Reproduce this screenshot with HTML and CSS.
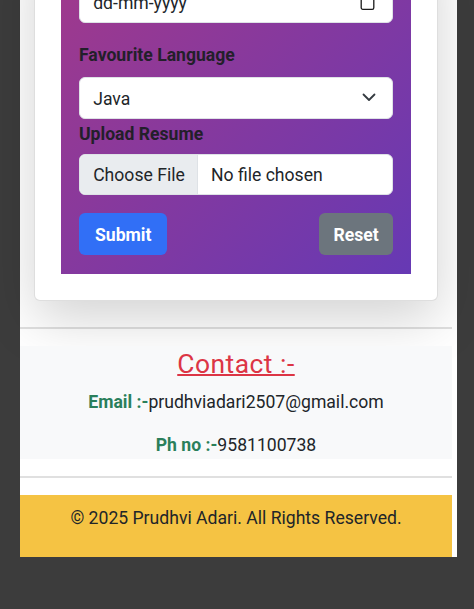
FILE: index.html
```html
<!DOCTYPE html>
<html lang="en">
<head>
<meta charset="utf-8">
<title>Registration</title>
<link rel="stylesheet" href="styles.css">
</head>
<body>
<div class="page">
  <main class="container">
    <div class="card">
      <form class="reg-form">
        <div class="field date-field">
          <span class="field-text">dd-mm-yyyy</span>
          <svg class="cal-icon" width="15" height="18" viewBox="0 0 15 18" aria-hidden="true">
            <rect x="1.2" y="1.7" width="12.6" height="14.6" rx="1.6" fill="none" stroke="#1a1a1a" stroke-width="1.3"/>
            <line x1="1.2" y1="5.5" x2="13.8" y2="5.5" stroke="#1a1a1a" stroke-width="1.2"/>
          </svg>
        </div>
        <label class="form-label lang-label">Favourite Language</label>
        <div class="field select-field">
          <span class="field-text">Java</span>
          <svg class="chevron" width="14" height="9" viewBox="0 0 14 9" aria-hidden="true">
            <path d="M1.5 1.5l5.5 5.5 5.5-5.5" fill="none" stroke="#343a40" stroke-width="1.8" stroke-linecap="round" stroke-linejoin="round"/>
          </svg>
        </div>
        <label class="form-label upload-label">Upload Resume</label>
        <div class="file-field">
          <span class="file-btn">Choose File</span>
          <span class="file-name">No file chosen</span>
        </div>
        <div class="actions">
          <button type="button" class="btn btn-submit">Submit</button>
          <button type="button" class="btn btn-reset">Reset</button>
        </div>
      </form>
    </div>
  </main>
  <hr class="divider">
  <section class="contact">
    <h4 class="contact-title">Contact :-</h4>
    <p class="contact-line first"><b class="tag">Email :-</b>prudhviadari2507@gmail.com</p>
    <p class="contact-line"><b class="tag">Ph no :-</b>9581100738</p>
  </section>
  <hr class="divider">
  <footer class="site-footer">© 2025 Prudhvi Adari. All Rights Reserved.</footer>
</div>
</body>
</html>
```
FILE: styles.css
```css
html, body {
  margin: 0;
  padding: 0;
}
body {
  background: #3c3c3c;
  font-family: Roboto, "Noto Sans", sans-serif;
  font-size: 17.6px;
  line-height: 26.4px;
  color: #212529;
  min-height: 609px;
}
.page {
  width: 432px;
  padding-right: 5px;
  margin-left: 20px;
  margin-top: -64.1px;
  background: #ffffff;
}
.container {
  padding: 0 14px 8px;
}
.card {
  background: #fff;
  border: 1px solid rgba(0, 0, 0, 0.13);
  border-radius: 6px;
  padding: 26.4px;
  box-shadow: 0 17.6px 52.8px rgba(0, 0, 0, 0.175);
}
.reg-form {
  background: linear-gradient(135deg, #a1398b 0%, #6639b4 100%);
  padding: 17.6px 17.6px 18.9px;
  display: flex;
  flex-direction: column;
}
.field {
  height: 41.8px;
  box-sizing: border-box;
  background: #fff;
  border: 1px solid #dee2e6;
  border-radius: 6px;
  display: flex;
  align-items: center;
  justify-content: space-between;
  padding: 0 14.5px 0 13.2px;
}
.field-text {
  padding-top: 2px;
}
.date-field {
  margin-bottom: 19.8px;
}
.cal-icon {
  margin-right: 3px;
  margin-top: 1px;
}
.form-label {
  font-weight: 700;
  color: #231f2a;
  display: block;
}
.lang-label {
  margin-bottom: 8px;
}
.select-field {
  margin-bottom: 2px;
  padding-right: 16px;
}
.upload-label {
  margin-bottom: 6.5px;
}
.file-field {
  height: 41.8px;
  box-sizing: border-box;
  display: flex;
  align-items: stretch;
  background: #fff;
  border: 1px solid #dee2e6;
  border-radius: 6px;
  overflow: hidden;
  margin-bottom: 17.5px;
}
.file-btn {
  display: flex;
  align-items: center;
  padding: 2px 12px 0 13.2px;
  background: #e9ecef;
  border-right: 1px solid #dee2e6;
}
.file-name {
  display: flex;
  align-items: center;
  padding: 2px 0 0 13.2px;
}
.actions {
  display: flex;
  justify-content: space-between;
}
.btn {
  height: 41.8px;
  border: 1px solid transparent;
  border-radius: 6px;
  font-family: inherit;
  font-size: 17.6px;
  font-weight: 700;
  color: #fff;
  padding: 2px 13.2px 0;
  cursor: pointer;
}
.btn-submit {
  background: #316ff6;
  padding: 2px 15px 0;
}
.btn-reset {
  background: #6c757d;
}
.divider {
  border: 0;
  border-top: 2px solid rgba(0, 0, 0, 0.12);
  height: 0;
  margin: 17.6px 0 17px;
}
.contact {
  background: #f8f9fa;
  text-align: center;
  padding: 3px 0 0;
  height: 113px;
  box-sizing: border-box;
}
.contact-title {
  margin: 0 0 8.8px;
  font-size: 26.4px;
  line-height: 31.7px;
  font-weight: 400;
  letter-spacing: 0.5px;
  color: #dc3545;
  text-decoration: underline;
  text-decoration-thickness: 1.6px;
}
.contact-line {
  margin: 0;
}
.contact-line.first {
  margin-bottom: 17px;
}
.tag {
  color: #2a7f5b;
  font-weight: 700;
}
.site-footer {
  background: #f5c343;
  text-align: center;
  padding: 9.6px 0 25.6px;
}
```
